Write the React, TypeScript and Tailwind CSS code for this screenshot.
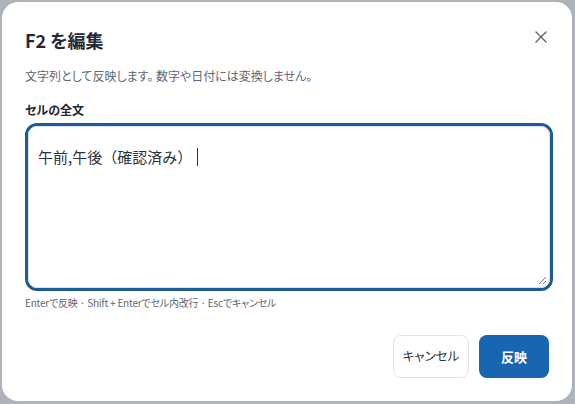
import React from "react";

export default function App() {
  return (
    <div
      className="w-[575px] h-[404px] bg-[#aeb3ba] pt-[2px] pl-[2px] pr-[3px] pb-[3px] [font-feature-settings:'palt']"
      style={{ fontFamily: '"Noto Sans CJK JP", "Noto Sans", sans-serif' }}
    >
      <div className="relative h-full w-full rounded-[16px] bg-white pl-[23px] pr-[18px] pt-[26px]">
        <button className="absolute right-[22px] top-[26px] flex h-[18px] w-[18px] items-center justify-center text-[#5b6270]">
          <svg width="12" height="12" viewBox="0 0 12 12" fill="none" stroke="currentColor" strokeWidth="1.4" strokeLinecap="round">
            <path d="M1 1L11 11M11 1L1 11" />
          </svg>
        </button>
        <h2 className="text-[18px] leading-[24px] font-bold text-[#1f2a37]">F2 を編集</h2>
        <p className="mt-[16px] text-[12px] leading-[16px] text-[#5f6673]">
          文字列として反映します。 数字や日付には変換しません。
        </p>
        <div className="mt-[18px] text-[12px] leading-[16px] font-bold text-[#1f2a37]">セルの全文</div>
        <div className="mt-[5px] mr-[1px] relative h-[168px] rounded-[12px] border-[3px] border-[#1b5c96] bg-white">
          <div className="absolute inset-0 rounded-[9px] border border-[#dde2e8]" />
          <div className="relative pl-[10px] pt-[20px] text-[15px] leading-[22px] text-[#2b3340] flex items-center [font-feature-settings:normal]">
            <span>午前,午後（確認済み）</span>
            <span className="ml-[5px] inline-block h-[18px] w-px bg-[#2b3340]" />
          </div>
          <svg className="absolute right-[3px] bottom-[3px]" width="9" height="9" viewBox="0 0 9 9" stroke="#7a808a" strokeWidth="1">
            <path d="M8 1L1 8M8 5L5 8" />
          </svg>
        </div>
        <p className="mt-[5px] text-[10px] leading-[14px] text-[#5f6673] tracking-[-0.2px]">
          Enterで反映 · Shift + Enterでセル内改行 · Escでキャンセル
        </p>
        <div className="mt-[25px] flex justify-end gap-[10px] pr-[5px]">
          <button className="h-[43px] w-[76px] rounded-[8px] border border-[#dfe3e8] bg-white text-[12.5px] text-[#2b3340]">
            キャンセル
          </button>
          <button className="h-[43px] w-[70px] rounded-[8px] bg-[#1866b0] text-[13px] font-bold text-white">
            反映
          </button>
        </div>
      </div>
    </div>
  );
}
